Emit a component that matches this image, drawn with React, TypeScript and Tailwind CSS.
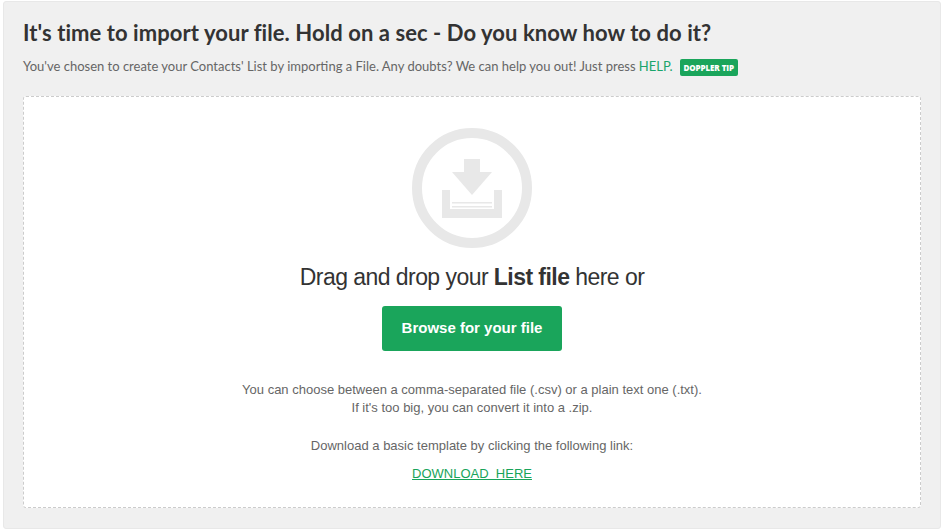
import React from 'react';

const ImportIcon: React.FC = () => (
  <svg width="120" height="120" viewBox="0 0 120 120" className="block">
    <circle cx="60" cy="60" r="55" fill="none" stroke="#e8e8e8" strokeWidth="10" />
    <path d="M52 31h16v13h12L60 67 40 44h12z" fill="#e8e8e8" />
    <path d="M30 62h8v19h44V62h8v28H30z" fill="#e8e8e8" />
    <path d="M40 74h40v1.500H40zM40 78h40v1.500H40z" fill="#e8e8e8" />
  </svg>
);

const App: React.FC = () => {
  return (
    <div className="h-[532px] w-[942px] overflow-hidden bg-white pl-[3px] pt-[1px] font-['Liberation_Sans',sans-serif]">
      <div className="h-[528px] w-[938px] rounded-[3px] border border-[#e8e8e8] bg-[#f0f0f0] pl-[19px] pr-[20px] pt-[17px]">
        <h1 className="font-['Lato',sans-serif] text-[22px] font-bold leading-[28px] tracking-[0.07px] text-[#333333]">
          It's time to import your file. Hold on a sec - Do you know how to do it?
        </h1>
        <div className="mt-[10px] flex h-[20px] items-center font-['Lato',sans-serif] text-[13px] text-[#666666]">
          <p>
            You've chosen to create your Contacts' List by importing a File. Any doubts? We can help you out! Just press{' '}
            <a className="text-[#1aa56b]">HELP.</a>
          </p>
          <span className="ml-[7px] rounded-[2px] bg-[#1aa55b] px-[4px] py-[2px] font-['Open_Sans',sans-serif] text-[8px] font-extrabold leading-[13px] tracking-[-0.1px] text-white">
            DOPPLER TIP
          </span>
        </div>
        <div className="mt-[19px] flex h-[412px] w-[898px] flex-col items-center rounded-[3px] border border-dashed border-[#cccccc] bg-white pt-[31px]">
          <ImportIcon />
          <h2 className="mt-[15px] text-[23px] leading-[28px] tracking-[-0.55px] text-[#333333]">
            Drag and drop your <strong className="font-bold">List file</strong> here or
          </h2>
          <button className="mt-[15px] h-[45px] w-[180px] rounded-[3px] bg-[#1aa55b] text-[15px] font-bold text-white">
            Browse for your file
          </button>
          <p className="mt-[30px] text-center text-[13px] leading-[18px] text-[#666666]">
            You can choose between a comma-separated file (.csv) or a plain text one (.txt).
            <br />
            If it's too big, you can convert it into a .zip.
          </p>
          <p className="mt-[20px] text-center text-[13px] leading-[18px] text-[#666666]">
            Download a basic template by clicking the following link:
          </p>
          <a className="mt-[10px] text-[13px] leading-[18px] text-[#18a45a] underline">DOWNLOAD&nbsp; HERE</a>
        </div>
      </div>
    </div>
  );
};

export default App;
